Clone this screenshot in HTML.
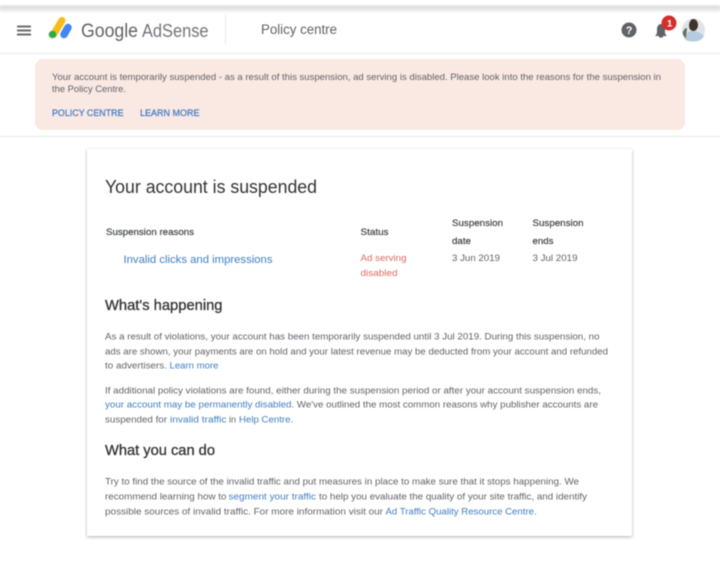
<!DOCTYPE html>
<html><head><meta charset="utf-8"><title>Policy centre - Google AdSense</title>
<style>
html,body{margin:0;padding:0;background:#fff;width:720px;height:563px;overflow:hidden}
svg{display:block;filter:blur(.4px)}
text{font-family:"Liberation Sans",sans-serif;font-size:9.6px;fill:#5f6368;white-space:pre}
.l{fill:#3f7fc0}
.h{fill:#3c4043;font-size:9.6px;stroke:#3c4043;stroke-width:.18px}
.b{fill:#4a80c8;font-size:9.6px;stroke:#4a80c8;stroke-width:.3px}
.t{fill:#333;font-size:14.5px;stroke:#333;stroke-width:.3px}
.n{fill:#333;font-size:18px;stroke-width:0}
</style></head><body>
<svg width="720" height="563" viewBox="0 0 720 563" xmlns="http://www.w3.org/2000/svg">
<defs>
<linearGradient id="g" x1="0" y1="0" x2="0" y2="1"><stop offset="0" stop-color="#ffffff"/><stop offset=".35" stop-color="#dcdcdc"/><stop offset="1" stop-color="#fdfdfd"/></linearGradient>
<filter id="s" x="-5%" y="-5%" width="110%" height="110%"><feDropShadow dx="0" dy="1" stdDeviation="1.6" flood-color="#000" flood-opacity=".32"/></filter>
</defs>
<rect width="720" height="563" fill="#fff"/>
<rect x="0" y="4" width="720" height="9" fill="url(#g)"/>
<rect x="0" y="53" width="720" height="1" fill="#e6e9ec"/>
<rect x="0" y="136" width="720" height="1" fill="#e6e9ec"/>
<path d="M17 25.500h14v2H17zM17 29.500h14v2H17zM17 33.500h14v2H17z" fill="#6a6e72"/>
<path d="M53.500 34.500L62 20.500" stroke="#f8bd14" stroke-width="7" stroke-linecap="round"/>
<circle cx="52.500" cy="34.500" r="3.800" fill="#35a84c"/>
<path d="M64 34.500L68 27.500" stroke="#4285f4" stroke-width="7.500" stroke-linecap="round"/>
<text x="81" y="37" style="font-size:19.500px;fill:#5f6368" textLength="57" lengthAdjust="spacingAndGlyphs">Google</text>
<text x="142" y="37" style="font-size:18.500px;fill:#70757a" textLength="66.500" lengthAdjust="spacingAndGlyphs">AdSense</text>
<rect x="225" y="15" width="1" height="29" fill="#e8eaed"/>
<text x="261" y="34" style="font-size:13.500px;fill:#5f6368" textLength="76" lengthAdjust="spacingAndGlyphs">Policy centre</text>
<circle cx="629" cy="30" r="7.500" fill="#5f6368"/>
<text x="625.700" y="34" style="font-size:11px;font-weight:700;fill:#fff">?</text>
<path d="M655 36c1-1 2-2 2-4v-3c0-3 2-5 4-5s4 2 4 5v3c0 2 1 3 2 4z" fill="#5f6368"/>
<rect x="659" y="36" width="4" height="1.500" fill="#5f6368"/>
<circle cx="669" cy="23" r="7.500" fill="#d3302b"/>
<text x="667" y="26.500" style="font-size:9.500px;font-weight:700;fill:#fff">1</text>
<circle cx="693.500" cy="30" r="11.500" fill="#dfe4e8"/>
<path d="M684 38c2-5 5-7 9-7s8 2 11 5c-2 4-6 5.500-10.500 5.500S686 41 684 38z" fill="#b5cbe0"/>
<path d="M689 26c0-4 2-7 4.500-7s4.500 3 4.500 6-2 6-4.500 6-4.500-2-4.500-5z" fill="#3d342c"/>
<path d="M682.500 33c1-3 2.500-5 4.500-5l-1 10c-2-1-2.500-2-3.500-5z" fill="#6a6e62"/>

<rect x="35" y="59" width="650" height="71" rx="8" fill="#fae8e3"/>
<text x="52" y="80" textLength="609" lengthAdjust="spacingAndGlyphs">Your account is temporarily suspended - as a result of this suspension, ad serving is disabled. Please look into the reasons for the suspension in</text>
<text x="52" y="92" textLength="74" lengthAdjust="spacingAndGlyphs">the Policy Centre.</text>
<text class="b" x="52" y="116" textLength="71.500" lengthAdjust="spacingAndGlyphs">POLICY CENTRE</text>
<text class="b" x="140" y="116" textLength="59.500" lengthAdjust="spacingAndGlyphs">LEARN MORE</text>

<rect x="87" y="149" width="545" height="387" fill="#fff" filter="url(#s)"/>
<text class="n" x="105" y="193" textLength="212" lengthAdjust="spacingAndGlyphs">Your account is suspended</text>
<text class="h" x="106" y="235" textLength="88" lengthAdjust="spacingAndGlyphs">Suspension reasons</text>
<text class="h" x="360.500" y="235" textLength="28" lengthAdjust="spacingAndGlyphs">Status</text>
<text class="h" x="452" y="226" textLength="51" lengthAdjust="spacingAndGlyphs">Suspension</text>
<text class="h" x="452" y="244" textLength="19" lengthAdjust="spacingAndGlyphs">date</text>
<text class="h" x="532.500" y="226" textLength="51" lengthAdjust="spacingAndGlyphs">Suspension</text>
<text class="h" x="532.500" y="244" textLength="21" lengthAdjust="spacingAndGlyphs">ends</text>
<text class="l" style="font-size:11px" x="123.500" y="263" textLength="149" lengthAdjust="spacingAndGlyphs">Invalid clicks and impressions</text>
<text style="fill:#dc6a5c" x="360.500" y="261" textLength="46" lengthAdjust="spacingAndGlyphs">Ad serving</text>
<text style="fill:#dc6a5c" x="360.500" y="276" textLength="37" lengthAdjust="spacingAndGlyphs">disabled</text>
<text x="452" y="261" textLength="48" lengthAdjust="spacingAndGlyphs">3 Jun 2019</text>
<text x="532.500" y="261" textLength="45" lengthAdjust="spacingAndGlyphs">3 Jul 2019</text>

<text class="t" x="105" y="310" textLength="117.500" lengthAdjust="spacingAndGlyphs">What's happening</text>
<text x="105" y="339.500" textLength="494.500" lengthAdjust="spacingAndGlyphs">As a result of violations, your account has been temporarily suspended until 3 Jul 2019. During this suspension, no</text>
<text x="105" y="354.500" textLength="503" lengthAdjust="spacingAndGlyphs">ads are shown, your payments are on hold and your latest revenue may be deducted from your account and refunded</text>
<text x="105" y="368.500" textLength="62" lengthAdjust="spacingAndGlyphs">to advertisers.</text>
<text class="l" x="169.500" y="368.500" textLength="49" lengthAdjust="spacingAndGlyphs">Learn more</text>

<text x="105" y="393.500" textLength="496" lengthAdjust="spacingAndGlyphs">If additional policy violations are found, either during the suspension period or after your account suspension ends,</text>
<text class="l" x="105" y="407.500" textLength="186.500" lengthAdjust="spacingAndGlyphs">your account may be permanently disabled</text>
<text x="291.500" y="407.500" textLength="306.500" lengthAdjust="spacingAndGlyphs">. We've outlined the most common reasons why publisher accounts are</text>
<text x="105" y="422.500" textLength="62" lengthAdjust="spacingAndGlyphs">suspended for</text>
<text class="l" x="170" y="422.500" textLength="56.500" lengthAdjust="spacingAndGlyphs">invalid traffic</text>
<text x="229" y="422.500" textLength="7" lengthAdjust="spacingAndGlyphs">in</text>
<text class="l" x="239" y="422.500" textLength="51.500" lengthAdjust="spacingAndGlyphs">Help Centre</text>
<text class="l" x="290.500" y="422.500">.</text>

<text class="t" x="105" y="455" textLength="110" lengthAdjust="spacingAndGlyphs">What you can do</text>
<text x="105" y="484.500" textLength="474" lengthAdjust="spacingAndGlyphs">Try to find the source of the invalid traffic and put measures in place to make sure that it stops happening. We</text>
<text x="105" y="499.500" textLength="121.500" lengthAdjust="spacingAndGlyphs">recommend learning how to</text>
<text class="l" x="228.500" y="499.500" textLength="87.500" lengthAdjust="spacingAndGlyphs">segment your traffic</text>
<text x="319" y="499.500" textLength="268" lengthAdjust="spacingAndGlyphs">to help you evaluate the quality of your site traffic, and identify</text>
<text x="105" y="514.500" textLength="278" lengthAdjust="spacingAndGlyphs">possible sources of invalid traffic. For more information visit our</text>
<text class="l" x="385.500" y="514.500" textLength="148.500" lengthAdjust="spacingAndGlyphs">Ad Traffic Quality Resource Centre</text>
<text class="l" x="534" y="514.500">.</text>
</svg>
</body></html>
